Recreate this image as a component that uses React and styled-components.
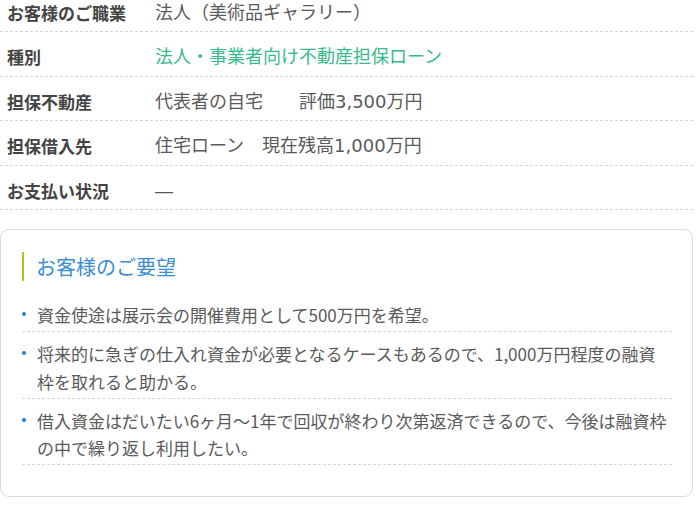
import React from "react";
import styled, { createGlobalStyle } from "styled-components";

const GlobalStyle = createGlobalStyle`
  body {
    margin: 0;
    background: #fff;
    font-family: "Noto Sans CJK JP", "Noto Sans", sans-serif;
    color: #555;
  }
`;

const Page = styled.div`
  width: 693px;
  margin-top: -12.5px;
`;

const InfoTable = styled.dl`
  margin: 0;
`;

const InfoRow = styled.div`
  display: grid;
  grid-template-columns: 155px 1fr;
  align-items: center;
  padding: 13px 0 7px;
  line-height: 23.5px;
  border-bottom: 1px dashed #d6d6d6;
`;

const Label = styled.dt`
  padding-left: 7px;
  font-size: 17px;
  font-weight: 700;
  color: #444;
`;

const Value = styled.dd`
  margin: 0;
  font-family: "DejaVu Sans", "Noto Sans CJK JP", sans-serif;
  font-size: 18px;
  color: ${(p) => (p.$accent ? "#35bb8c" : "#5a5a5a")};
  white-space: pre;
`;

const Card = styled.section`
  margin-top: 19px;
  border: 1px solid #dcdcdc;
  border-radius: 9px;
  padding: 22px 20px 31px 21px;
`;

const Heading = styled.h3`
  margin: 0;
  padding-left: 12px;
  border-left: 2px solid #a3cc1f;
  font-size: 20px;
  font-weight: 400;
  line-height: 29px;
  color: #3a8dd3;
`;

const WishList = styled.ul`
  list-style: none;
  margin: 12px 0 0;
  padding: 0;
`;

const WishItem = styled.li`
  position: relative;
  padding: 8px 0 2.5px 15px;
  font-size: 17px;
  line-height: 27.5px;
  color: #5a5a5a;
  border-bottom: 1px dashed #d6d6d6;

  &::before {
    content: "";
    position: absolute;
    left: 0;
    top: 19px;
    width: 4px;
    height: 4px;
    border-radius: 50%;
    background: #2580cc;
  }
`;

const rows = [
  { label: "お客様のご職業", value: "法人（美術品ギャラリー）" },
  { label: "種別", value: "法人・事業者向け不動産担保ローン", accent: true },
  { label: "担保不動産", value: "代表者の自宅　　評価3,500万円" },
  { label: "担保借入先", value: "住宅ローン　現在残高1,000万円" },
  { label: "お支払い状況", value: "―" },
];

const wishes = [
  "資金使途は展示会の開催費用として500万円を希望。",
  "将来的に急ぎの仕入れ資金が必要となるケースもあるので、1,000万円程度の融資枠を取れると助かる。",
  "借入資金はだいたい6ヶ月～1年で回収が終わり次第返済できるので、今後は融資枠の中で繰り返し利用したい。",
];

export default function App() {
  return (
    <>
      <GlobalStyle />
      <Page>
        <InfoTable>
          {rows.map((r) => (
            <InfoRow key={r.label}>
              <Label>{r.label}</Label>
              <Value $accent={r.accent}>{r.value}</Value>
            </InfoRow>
          ))}
        </InfoTable>

        <Card>
          <Heading>お客様のご要望</Heading>
          <WishList>
            {wishes.map((w) => (
              <WishItem key={w}>{w}</WishItem>
            ))}
          </WishList>
        </Card>
      </Page>
    </>
  );
}
